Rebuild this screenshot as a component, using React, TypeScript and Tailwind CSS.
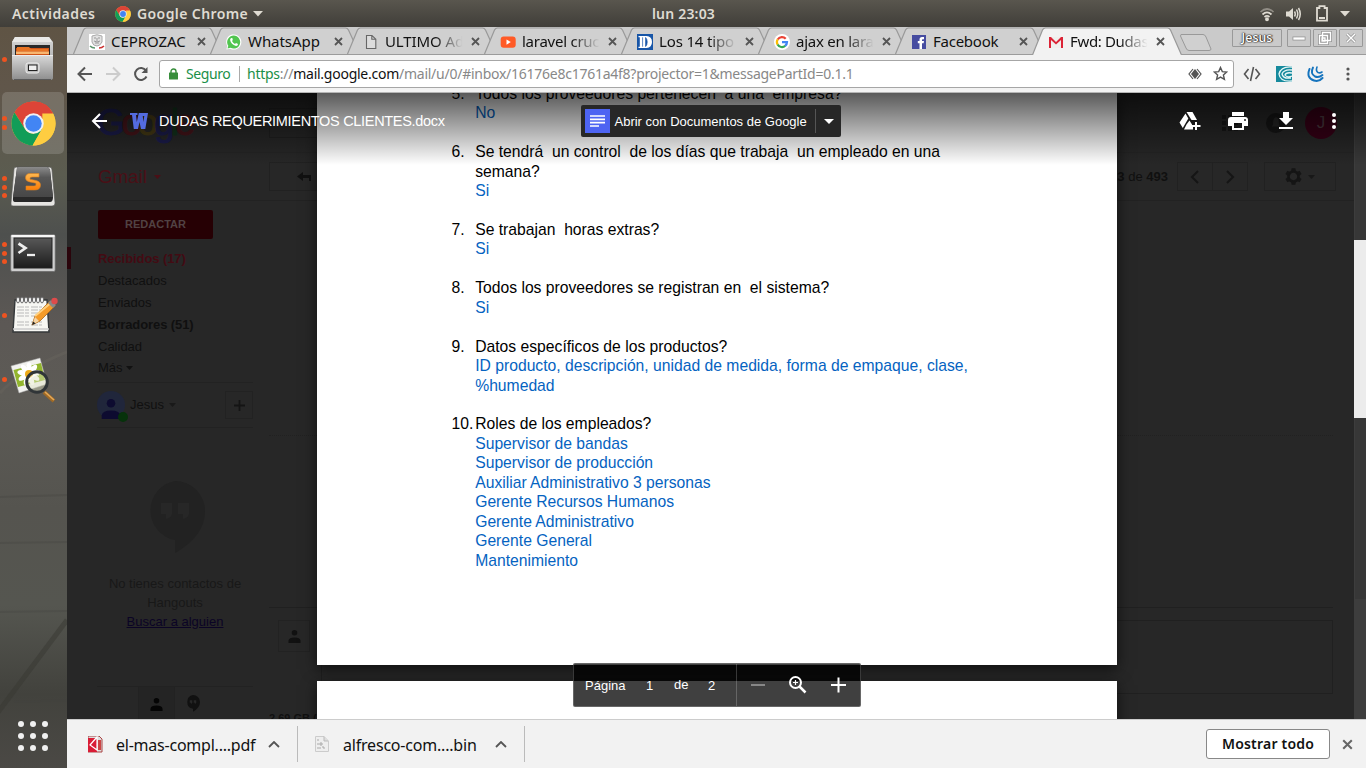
import React from "react";

const ui = "font-['Noto_Sans','Open_Sans',sans-serif]";
const arial = "font-['Liberation_Sans',Arial,sans-serif]";

function ChromeLogo({ size }: { size: number }) {
  return (
    <svg width={size} height={size} viewBox="0 0 48 48" className="block shrink-0">
      <circle cx="24" cy="24" r="23.5" fill="#fc3" />
      <path d="M24 24 L3.7 12.2 A23.5 23.5 0 0 1 44.9 13.2 Z" fill="#dd4437" />
      <path d="M24 13.2 H44.9 A23.5 23.5 0 0 0 3.7 12.2 L14.6 29.4 Z" fill="#dd4437" />
      <path d="M3.7 12.2 L14.6 29.4 A10.8 10.8 0 0 0 24 34.8 L33.4 29.4 L23 47.5 A23.5 23.5 0 0 1 3.7 12.2Z" fill="#119d58" />
      <path d="M33.4 13.2 H44.9 A23.5 23.5 0 0 1 23 47.5 L33.4 29.4Z" fill="#fecd41" />
      <circle cx="24" cy="24" r="10.9" fill="#f1f1f1" />
      <circle cx="24" cy="24" r="8.8" fill="#4285f4" />
    </svg>
  );
}

function TopBar() {
  return (
    <header className={`${ui} flex h-[27px] w-full shrink-0 items-center bg-gradient-to-b from-[#59564e] to-[#403e39] text-[#dfdbd2]`}>
      <div className="w-[104px] pl-[12px] text-[14px] font-semibold tracking-[0.45px] whitespace-nowrap">Actividades</div>
      <div className="flex w-[500px] items-center pl-[11px]">
        <ChromeLogo size={16} />
        <span className="ml-[6px] w-[110px] text-[14px] font-semibold tracking-[0.4px] whitespace-nowrap">Google Chrome</span>
        <svg width="10" height="6" viewBox="0 0 10 6" className="ml-[6px]"><path d="M0 0H10L5 5.5Z" fill="currentColor" /></svg>
      </div>
      <div className="w-[160px] pr-[1px] text-center text-[14px] font-semibold tracking-[0.2px] whitespace-nowrap">lun 23:03</div>
      <div className="ml-auto flex items-center pr-[16px]">
        <svg width="16" height="16" viewBox="0 0 16 16" fill="none" stroke="currentColor" strokeWidth="1.7">
          <path d="M1.5 6 Q8 0 14.5 6" opacity=".45" /><path d="M3.5 8.5 Q8 4.4 12.5 8.5" /><path d="M5.5 11 Q8 8.8 10.5 11" /><circle cx="8" cy="13.2" r="1.1" fill="currentColor" />
        </svg>
        <svg width="17" height="16" viewBox="0 0 17 16" fill="none" stroke="currentColor" strokeWidth="1.5" className="ml-[10px]">
          <path d="M1 5.5H4L8 2V14L4 10.5H1Z" fill="currentColor" stroke="none" /><path d="M9.5 5.5Q11 8 9.5 10.5M11.5 3.5Q14 8 11.5 12.5M13.5 2Q17 8 13.5 14" />
        </svg>
        <svg width="14" height="17" viewBox="0 0 14 17" fill="none" stroke="currentColor" strokeWidth="1.8" className="ml-[13px]">
          <path d="M2 3H4.4V1.2H9.6V3H12V15.6H2Z" /><path d="M4 13H10" strokeWidth="2" />
        </svg>
        <svg width="10" height="6" viewBox="0 0 10 6" className="ml-[11px]"><path d="M0 0H10L5 5.5Z" fill="currentColor" /></svg>
      </div>
    </header>
  );
}

function FilesIcon() {
  return (
    <svg width="46" height="48" viewBox="0 0 46 48">
      <defs>
        <linearGradient id="fcab" x1="0" y1="0" x2="0" y2="1"><stop offset="0" stopColor="#d9d9d9" /><stop offset="1" stopColor="#8d8d8d" /></linearGradient>
      </defs>
      <path d="M5 2H39L43 7V42Q43 45 40 45H4Q2 45 2 42V7Z" fill="url(#fcab)" />
      <path d="M5 2H39L42 7H2Z" fill="#e9e9e7" />
      <rect x="5" y="10" width="35" height="10" fill="#292929" />
      <path d="M6 13H39V20H6Z" fill="#cf5417" /><path d="M7 12H19L21 14H38V16H7Z" fill="#e87424" /><path d="M6 16.5H39V19H6Z" fill="#f8b670" />
      <path d="M2 20H43V42Q43 45 40 45H5Q2 45 2 42Z" fill="url(#fcab)" /><path d="M2 20.5H43" stroke="#ececec" />
      <rect x="16" y="28" width="13" height="10" rx="2" fill="#bdbdbd" stroke="#eee" /><rect x="18.5" y="30" width="8.5" height="5.5" fill="#efefef" stroke="#222" />
      <path d="M4 44.5H41" stroke="#5b5b5b" />
    </svg>
  );
}

function SublimeIcon() {
  return (
    <svg width="46" height="44" viewBox="0 0 46 44">
      <defs>
        <linearGradient id="key" x1="0" y1="0" x2="0" y2="1"><stop offset="0" stopColor="#8b8b8b" /><stop offset=".35" stopColor="#575757" /><stop offset="1" stopColor="#474747" /></linearGradient>
        <linearGradient id="sg" x1="0" y1="0" x2="0" y2="1"><stop offset="0" stopColor="#ffb84f" /><stop offset="1" stopColor="#fa7d08" /></linearGradient>
      </defs>
      <path d="M4 4Q4 2 7 2H39Q42 2 42 5L45 38Q45 41 42 41H3Q.5 41 1 38Z" fill="#e6e5e2" stroke="#555" strokeWidth=".6" />
      <path d="M7 3Q7 2 9 2H37Q39 2 40 5L43 32Q43 37 40 37H5Q2.5 37 3 33Z" fill="#282828" />
      <path d="M7 3Q7 2 9 2H37Q39 2 40 5L43 32H3Z" fill="url(#key)" />
      <path d="M29 12V8.5H20Q15.5 8.5 15.5 13Q15.5 16 20 17L26 18.2Q26.5 21 24 21H16V25H24.5Q30.5 25 30.5 20Q30.5 16.5 26 15.5L20 14.2Q19.5 12 22 12Z" fill="url(#sg)" stroke="#d98124" strokeWidth=".6" />
    </svg>
  );
}

function TerminalIcon() {
  return (
    <svg width="46" height="40" viewBox="0 0 46 40">
      <defs><linearGradient id="tm" x1="0" y1="0" x2="0" y2="1"><stop offset="0" stopColor="#585858" /><stop offset="1" stopColor="#1c1c1c" /></linearGradient></defs>
      <rect x=".7" y="1.5" width="44.5" height="37" rx="1.5" fill="#cecece" stroke="#666" strokeWidth=".7" />
      <rect x="1.5" y="2" width="43" height="2" fill="#f7f7f7" />
      <rect x="4" y="5" width="38" height="30" fill="url(#tm)" stroke="#222" />
      <path d="M8.5 10.5L15.5 15L8.5 20" fill="none" stroke="#eee" strokeWidth="2.7" /><path d="M17 22H25" stroke="#eee" strokeWidth="2.3" />
    </svg>
  );
}

function NotepadIcon() {
  const lines = [12, 15, 18, 21, 27, 30];
  return (
    <svg width="48" height="40" viewBox="0 0 48 40">
      <path d="M5 5H37L39 37H3Z" fill="#f7f7f3" stroke="#343739" strokeWidth="1.4" /><path d="M3 34H39" stroke="#ccc" strokeWidth="1.5" />
      {[8, 12, 16, 20, 24, 28, 32].map((x) => <ellipse key={x} cx={x} cy="5" rx="1.5" ry="3" fill="#fff" stroke="#666" />)}
      {lines.map((y) => <path key={y} d={`M7 ${y}H32`} stroke="#aaa" strokeDasharray="7 1 4 2" strokeWidth=".8" />)}
      <path d="M22 30L25 21L40 6L45 11L30 26Z" fill="#f49b29" stroke="#a96517" strokeWidth=".8" /><path d="M25 21L42 7" stroke="#ffd180" strokeWidth="2" />
      <path d="M22 30L25 22L29 26Z" fill="#f4d4a5" /><path d="M22 30L23.2 26.5L25.5 28.5Z" fill="#222" />
      <path d="M38 8L41 5L46 10L43 13Z" fill="#888" /><circle cx="44.500" cy="6" r="3.2" fill="#de4b4b" />
    </svg>
  );
}

function ViewerIcon() {
  return (
    <svg width="48" height="48" viewBox="0 0 48 48">
      <path d="M1 10L30 2L37 28L9 37Z" fill="#f1f1ee" stroke="#aaa" strokeWidth=".5" /><path d="M3.500 14L31 7L35 24L8 31Z" fill="#92b52e" />
      {[0, 40, 80, 120, 160, 200, 240, 280, 320].map((a) => <ellipse key={a} cx="19" cy="11.5" rx="2.7" ry="5.3" fill="white" transform={`rotate(${a} 19 18)`} />)}
      <circle cx="19" cy="18" r="4" fill="#edaa19" />
      <path d="M34 36L44 45" stroke="#a06a25" strokeWidth="4" /><path d="M35 36L44 44" stroke="#e3a859" strokeWidth="1.6" />
      <circle cx="27" cy="26" r="10.3" fill="#dfe3c4" fillOpacity=".45" stroke="#303538" strokeWidth="3" /><path d="M19 24Q23 18 29 19" fill="none" stroke="#fff" strokeWidth="1.4" opacity=".7" />
    </svg>
  );
}

function DockItem({ dots, children, box, h }: { dots: number; children: React.ReactNode; box?: string; h: string }) {
  return (
    <div className={`flex ${h} w-full items-center`}>
      <div className="flex w-[10px] shrink-0 flex-col items-end gap-[3.4px] pr-[3px]">
        {Array.from({ length: dots }).map((_, i) => <span key={i} className="h-[5px] w-[5px] rounded-full bg-[#ee5320]" />)}
      </div>
      <div className={`flex shrink-0 ${box ?? ""}`}>{children}</div>
    </div>
  );
}

function Dock() {
  return (
    <aside className="relative flex w-[67px] shrink-0 flex-col overflow-hidden bg-[linear-gradient(180deg,#5f5444_0%,#60564a_8%,#5b5c50_20%,#4e504e_28%,#5c5855_40%,#5d5b56_50%,#55544f_65%,#555650_78%,#42423d_90%,#4b4945_100%)]">
      <svg className="absolute inset-0" width="67" height="741" fill="none">
        <path d="M-4 688L67 593" stroke="#373831" strokeWidth="5" opacity=".5" />
        <path d="M0 516L67 515M0 585L67 584M14 675L67 673M0 470L67 468" stroke="#41433f" strokeWidth="2" opacity=".3" />
        <path d="M0 366Q20 344 67 325" stroke="#777269" strokeWidth="3" opacity=".2" />
      </svg>
      <div className="relative flex flex-1 flex-col">
        <DockItem dots={1} h="h-[64px]" box="pb-[1px]"><FilesIcon /></DockItem>
        <div className="relative h-[64px]"><div className="absolute top-[1px] left-[2px] h-[62px] w-[62px] rounded-[5px] bg-white/15" /><DockItem dots={2} h="relative h-[64px]" box="pl-[1px]"><ChromeLogo size={45} /></DockItem></div>
        <DockItem dots={3} h="h-[64px]"><SublimeIcon /></DockItem>
        <DockItem dots={3} h="h-[68px]"><TerminalIcon /></DockItem>
        <DockItem dots={1} h="h-[57px]" box="pb-[2px]"><NotepadIcon /></DockItem>
        <DockItem dots={1} h="h-[71px]"><ViewerIcon /></DockItem>
        <div className="mt-auto mb-[17px] ml-[18px] grid w-[30px] grid-cols-3 gap-[6px]">
          {Array.from({ length: 9 }).map((_, i) => <span key={i} className="h-[6px] w-[6px] rounded-full bg-[#f0f0f0]" />)}
        </div>
      </div>
    </aside>
  );
}

const favicons: Record<string, React.ReactNode> = {
  ceprozac: <svg width="16" height="16" viewBox="0 0 16 16"><path fill="#fff" d="M0 0h16v16H0z" /><path d="M3 2Q8-.5 13 2V8Q11 12 8 12Q4 12 3 8Z" fill="#e2e2e2" stroke="#aaa" /><path d="M5 4H7M9 4H11M5 7Q8 9 11 7M6 9H10M8 4V7" stroke="#999" fill="none" /><path d="M1 12Q3 14 6 14" stroke="#5b966e" strokeWidth="1.5" fill="none" /><path d="M10 14Q13 14 15 12" stroke="#c33" strokeWidth="1.5" fill="none" /></svg>,
  whatsapp: <svg width="16" height="16" viewBox="0 0 16 16"><path d="M.4 15.6L1.3 12A7.6 7.6 0 1 1 4.2 14.7Z" fill="#fff" /><path d="M1.5 14.5L2.3 11.8A6.5 6.5 0 1 1 4.5 13.8Z" fill="#52c550" /><path d="M5.4 4Q4 4.4 4.1 6Q5 10.5 10 12Q12 11.8 12 10L10 9L9 10Q7 9 6 7L6.8 6L6.3 4Z" fill="#fff" /></svg>,
  page: <svg width="16" height="16" viewBox="0 0 16 16"><path d="M3.5 1.5H9L12.8 5.2V14.5H3.5ZM8.8 1.5V5.3H12.8" fill="#dcdcdc" stroke="#666" strokeWidth="1.1" /></svg>,
  youtube: <svg width="16" height="16" viewBox="0 0 16 16"><rect x=".7" y="2.5" width="15" height="11.3" rx="3" fill="#ff5a26" /><path d="M6.5 5.5L10.8 8.1L6.5 10.7Z" fill="#fff" /></svg>,
  dd: <svg width="16" height="16" viewBox="0 0 16 16"><path fill="#1755a7" d="M0 0h16v16H0z" /><path d="M1.500 2H9.500Q15 2.500 15 8Q15 13.500 9.500 14H1.500V12.700H2.800V3.300H1.500Z" fill="#fff" /><path d="M5.600 3.300V12.700M8.600 3.500Q10.200 5 10.200 8Q10.200 11 8.600 12.500Z" fill="#1755a7" stroke="#1755a7" strokeWidth=".7" /></svg>,
  google: <svg width="16" height="16" viewBox="0 0 16 16"><circle cx="8" cy="8" r="8" fill="#fff" /><g fill="none" strokeWidth="2.2"><path d="M11.7 4.7A5 5 0 0 0 3.7 5.5" stroke="#ea4335" /><path d="M3.7 5.3A5 5 0 0 0 3.7 10.7" stroke="#fbbc05" /><path d="M3.6 10.5A5 5 0 0 0 11.3 11.8" stroke="#34a853" /><path d="M8 8.1H13A5 5 0 0 1 11.2 11.8" stroke="#4285f4" /></g></svg>,
  facebook: <svg width="16" height="16" viewBox="0 0 16 16"><rect x="1" y="1" width="14" height="14" fill="#464ca0" /><path d="M8.5 15V9.3H6.8V7H8.5V5.5Q8.5 3 11 3H13V5.2H11.7Q11 5.2 11 6V7H13L12.6 9.3H11V15Z" fill="#fff" /></svg>,
  gmail: <svg width="16" height="16" viewBox="0 0 16 16"><path d="M1 3H15V14H1Z" fill="#efefed" /><path d="M1 14V3H3L8 8L13 3H15V14H13V6L8 10.5L3 6V14Z" fill="#dc2437" /></svg>,
};

const tabs: [string, string, string][] = [
  ["ceprozac", "CEPROZAC", "text-[15px] tracking-[-0.050px]"],
  ["whatsapp", "WhatsApp", "text-[15px] tracking-[-0.050px]"],
  ["page", "ULTIMO Ad", "text-[15px] tracking-[-0.100px]"],
  ["youtube", "laravel cruc", "text-[15px] tracking-[-0.250px]"],
  ["dd", "Los 14 tipo", "text-[15px] tracking-[-0.150px]"],
  ["google", "ajax en lara", "text-[15px] tracking-[-0.250px]"],
  ["facebook", "Facebook", "text-[15px] tracking-[-0.250px]"],
  ["gmail", "Fwd: Dudas", "text-[15px] tracking-[-0.350px]"],
];

function Cross({ s = 9, c = "#555", w = 1.8 }: { s?: number; c?: string; w?: number }) {
  return <svg width={s} height={s} viewBox="0 0 9 9"><path d="M1 1L8 8M8 1L1 8" stroke={c} strokeWidth={w} /></svg>;
}

function TabStrip() {
  return (
    <div className={`${ui} relative flex h-[28px] shrink-0 bg-[#cacaca]`}>
      <svg className="absolute inset-0" width="1299" height="28" fill="none">
        <path d="M0 27.5H1299" stroke="#9b9b9b" />
        {[0, 1, 2, 3, 4, 5, 6].map((n) => (
          <path key={n} transform={`translate(${6 + n * 137} 0)`} d="M.5 27L10.5 3Q11.5 1 13.5 1H135.5Q137.5 1 138.5 3L149.5 27" fill="#d0d0d0" stroke="#999" strokeWidth="1.2" />
        ))}
        <path transform="translate(965 0)" d="M.5 28L10.5 3Q11.5 1 13.5 1H135.5Q137.5 1 138.5 3L149.5 28" fill="#f2f2f2" stroke="#999" strokeWidth="1.2" />
        <path d="M1114 7.5H1136Q1138 7.5 1139 10L1144 22Q1144 23.500 1142 23.500H1122Q1120 23.500 1119 21L1113.500 9Z" fill="#d0d0d0" stroke="#999" />
      </svg>
      <div className="relative flex pl-[22px]">
        {tabs.map(([id, title, tr]) => (
          <div key={id} className="flex h-[29px] w-[137px] items-center">
            {favicons[id]}
            <span className={`-mt-[2px] ml-[6px] w-[80px] overflow-hidden leading-[20px] whitespace-nowrap text-[#111] ${tr} ${title.length > 8 ? "[mask-image:linear-gradient(90deg,#000_62%,transparent_97%)]" : ""}`}>{title}</span>
            <span className="ml-[5.500px]"><Cross /></span>
          </div>
        ))}
      </div>
      <div className="relative ml-auto flex gap-[5px] pt-[2px] pr-[3px]">
        <div className="flex h-[18px] w-[50px] items-center justify-center rounded-[1px] border border-[#999] text-[12.500px] font-medium text-white [text-shadow:0_0_1px_#222,0_0_2px_#222,1px_0_1px_#333]">Jesus</div>
        <div className="flex gap-[2px]">
          {["M5 8H15V9H5Z", "M7.500 2.500H15.500V10.500H7.500ZM4.500 5.500H12.500V13.500H4.500ZM7 8H10V11H7Z", "M6 4L14 12M14 4L6 12"].map((d) => (
            <div key={d} className="flex h-[18px] w-[24px] items-center justify-center rounded-[1px] border border-[#999]">
              <svg width="20" height="16" viewBox="0 0 20 16" fill="none"><path d={d} stroke="#999" strokeWidth="3" /><path d={d} stroke="#fff" strokeWidth="1.3" /></svg>
            </div>
          ))}
        </div>
      </div>
    </div>
  );
}

function Toolbar() {
  return (
    <div className={`${ui} flex h-[38px] shrink-0 items-center border-b border-[#b5b5b5] bg-[#f2f2f2]`}>
      <svg width="92" height="24" viewBox="0 0 92 24" fill="none" stroke="#555" strokeWidth="2">
        <path d="M25 12H12M18 5.500L11.500 12L18 18.500" />
        <path d="M39 12H52M46 5.500L52.500 12L46 18.500" stroke="#ccc" />
        <path d="M79 8.500A6 6 0 1 0 79.500 14.500" /><path d="M80.500 5V11H74.500Z" fill="#555" stroke="none" />
      </svg>
      <div className="flex h-[28px] w-[1075px] items-center rounded-[3px] border border-[#a6a6a6] bg-white pl-[9px] text-[14px] whitespace-nowrap">
        <svg width="9" height="12" viewBox="0 0 9 12"><path d="M2 5V3.500A2.500 2.500 0 0 1 7 3.500V5" fill="none" stroke="#388e3c" strokeWidth="1.4" /><rect y="4.500" width="9" height="7" rx=".5" fill="#388e3c" /></svg>
        <span className="ml-[8px] w-[45px] tracking-[-0.400px] text-[#1a8f48]">Seguro</span>
        <span className="ml-[8px] h-[16px] w-px bg-[#aaa]" />
        <span className="ml-[7px] tracking-[-0.255px] text-[#888]"><span className="text-[#1a8f48]">https</span>://<span className="text-[#111]">mail.google.com</span>/mail/u/0/#inbox/16176e8c1761a4f8?projector=1&amp;messagePartId=0.1.1</span>
        <svg width="14" height="12" viewBox="0 0 14 12" className="ml-auto"><path d="M5 1L1 6L5 11M9 1L13 6L9 11" fill="none" stroke="#555" strokeWidth="1.2" /><path d="M7 1L11 6L7 11L3 6Z" fill="#555" /></svg>
        <svg width="15" height="15" viewBox="0 0 15 15" className="mr-[5px] ml-[11px]"><path d="M7.500 1.500L9.300 5.600L13.700 6L10.400 9L11.400 13.400L7.500 11.100L3.600 13.400L4.600 9L1.300 6L5.700 5.600Z" fill="none" stroke="#555" strokeWidth="1.4" /></svg>
      </div>
      <svg width="18" height="16" viewBox="0 0 18 16" fill="none" stroke="#555" strokeWidth="1.6" className="ml-[9px]"><path d="M5.500 3L1.500 8L5.500 13M12.500 3L16.500 8L12.500 13M10.500 1L7.500 15" /></svg>
      <svg width="16" height="16" viewBox="0 0 16 16" className="ml-[15px]"><path d="M0 0H16V16H0Z" fill="#168a9d" /><path d="M16 1Q5 0 3 8Q4 16 16 15M16 4Q8 3 6 8Q7 13 15 12M16 7Q10 6 9 9Q11 12 16 10" fill="none" stroke="#e9f7f7" strokeWidth="1.3" /></svg>
      <svg width="17" height="17" viewBox="0 0 17 17" fill="none" stroke="#1674bd" strokeLinecap="round" className="ml-[15px]"><path d="M2.500 4Q-1 13 7 15.500Q12 17 15.500 13" strokeWidth="2" /><path d="M6 2.500Q3 8.500 8 11.500Q12 13 15.500 10" strokeWidth="1.900" /><path d="M10 2Q8.500 6 11 7.500Q13 8.500 15 7" strokeWidth="1.600" /></svg>
      <svg width="4" height="14" viewBox="0 0 4 14" fill="#555" className="ml-[22px]"><circle cx="2" cy="2" r="1.600" /><circle cx="2" cy="7" r="1.600" /><circle cx="2" cy="12" r="1.600" /></svg>
    </div>
  );
}

function Person({ s, c }: { s: number; c: string }) {
  return <svg width={s} height={s} viewBox="0 0 14 14" fill={c}><circle cx="7" cy="3" r="3" /><path d="M.5 14V11.500Q1 8 7 8Q13 8 13.500 11.500V14Z" /></svg>;
}

function Quote({ w, c, hole }: { w: number; c: string; hole: string }) {
  return <svg width={w} height={w * 1.2} viewBox="0 0 60 72"><path d="M30 0A30 30 0 0 1 60 30Q60 55 30 72V59A30 30 0 0 1 30 0Z" fill={c} /><path d="M16 22H27V33Q26 37 21 38V33H16ZM33 22H44V33Q43 37 38 38V33H33Z" fill={hole} /></svg>;
}

function GmailPage() {
  return (
    <div className={`${arial} flex h-full w-full bg-[#272727] text-[13px] text-[#101010]`}>
      <div className="flex min-w-0 flex-1 flex-col">
        <div className="flex h-[60px] shrink-0 items-center border-b border-[#242424] pl-[30px]">
          <div className="w-[172px] text-[36px] leading-none tracking-[-3.600px] [-webkit-text-stroke:1px]">
            <span className="text-[#1b1c4c]">G</span><span className="text-[#461419]">o</span><span className="text-[#463a14]">o</span><span className="text-[#1b1c4c]">g</span><span className="text-[#12331c]">l</span><span className="text-[#461419]">e</span>
          </div>
          <div className="h-[30px] w-[560px] border border-[#202020]" />
          <div className="ml-auto flex items-center pr-[17px]">
            <div className="mr-[28px] grid grid-cols-3 gap-[2px]">{Array.from({ length: 9 }).map((_, i) => <span key={i} className="h-[4px] w-[4px] bg-[#171717]" />)}</div>
            <div className="mr-[19px] flex h-[20px] w-[20px] items-center justify-center rounded-full bg-[#161616]"><svg width="10" height="12" viewBox="0 0 14 16" fill="#272727"><path d="M7 0Q11 1 11 7V10L13 13H1L3 10V7Q3 1 7 0Z" /></svg></div>
            <div className="flex h-[32px] w-[32px] items-center justify-center rounded-full bg-[#370016] text-[17px] text-[#4b3b40]">J</div>
          </div>
        </div>
        <div className="flex h-[48px] shrink-0 items-center border-b border-[#222]">
          <div className="flex w-[202px] items-center pt-[1px] pl-[31px] text-[18.700px] text-[#4a0f16]">Gmail<svg className="ml-[7px]" width="7" height="4"><path d="M0 0H7L3.500 4Z" fill="currentColor" /></svg></div>
          <div className="flex h-[29px] w-[74px] items-center justify-center border border-[#212121] pr-[4px]"><svg width="15" height="10" viewBox="0 0 15 10"><path d="M0 4.500L6 0V3H14V9H12V6H6V9Z" fill="#111" /></svg></div>
          <div className="ml-auto flex items-center pr-[18px]">
            <span className="mr-[9px]"><b>23</b> de <b>493</b></span>
            <div className="flex h-[29px] w-[71px] border border-[#212121]">
              {["M8 1L2 7L8 13", "M2 1L8 7L2 13"].map((d, i) => <div key={d} className={`flex flex-1 items-center justify-center ${i ? "border-l border-[#212121]" : ""}`}><svg width="10" height="14"><path d={d} fill="none" stroke="#151515" strokeWidth="2" /></svg></div>)}
            </div>
            <div className="ml-[16px] flex h-[29px] w-[72px] items-center justify-center border border-[#212121]">
              <svg width="17" height="17" viewBox="-8.500 -8.500 17 17"><circle r="5" fill="none" stroke="#151515" strokeWidth="2.600" />{[0, 60, 120, 180, 240, 300].map((a) => <path key={a} d="M-1.900 -8.200H1.900L2.400 -5H-2.400Z" fill="#151515" transform={`rotate(${a})`} />)}</svg>
              <svg className="ml-[6px]" width="7" height="4"><path d="M0 0H7L3.500 4Z" fill="#181818" /></svg>
            </div>
          </div>
        </div>
        <div className="flex min-h-0 flex-1">
          <nav className="flex w-[202px] shrink-0 flex-col">
            <div className="mt-[9px] ml-[31px] flex h-[29px] w-[115px] items-center justify-center rounded-[2px] bg-[#260004] text-[11px] font-bold text-[#514243]">REDACTAR</div>
            <div className="mt-[8px] flex h-[22px] items-center border-l-4 border-[#2a040b] pt-[2px] pl-[27px] font-bold tracking-[-0.080px] text-[#430b13]">Recibidos (17)</div>
            <div className="flex h-[22px] items-center pt-[2px] pl-[31px]">Destacados</div>
            <div className="flex h-[22px] items-center pt-[2px] pl-[31px]">Enviados</div>
            <div className="flex h-[22px] items-center pt-[2px] pl-[31px] font-bold tracking-[-0.080px]">Borradores (51)</div>
            <div className="flex h-[22px] items-center pt-[2px] pl-[31px]">Calidad</div>
            <div className="flex h-[21px] items-center pl-[31px]">Más<svg className="ml-[3px]" width="7" height="4"><path d="M0 0H7L3.500 4Z" fill="#111" /></svg></div>
            <div className="mt-[4px] ml-[30px] flex h-[46px] w-[156px] items-center border-y border-[#222]">
              <div className="relative flex h-[28px] w-[28px] items-end justify-center overflow-visible rounded-full bg-[#20263b]"><Person s={20} c="#0d0b30" /><span className="absolute right-[-3px] bottom-[-3px] h-[10px] w-[10px] rounded-full bg-[#06320b]" /></div>
              <span className="ml-[5px]">Jesus</span><svg className="ml-[5px]" width="7" height="4"><path d="M0 0H7L3.500 4Z" fill="#191919" /></svg>
              <span className="ml-auto flex h-[28px] w-[28px] items-center justify-center border border-[#222]"><svg width="11" height="11"><path d="M5.500 0V11M0 5.500H11" stroke="#141414" strokeWidth="1.800" /></svg></span>
            </div>
            <div className="mt-[53px] ml-[78px]"><Quote w={60} c="#222222" hole="#272727" /></div>
            <div className="mt-[21px] w-[186px] pl-[30px] text-center leading-[19px] text-[#181818]"><p>No tienes contactos de</p><p>Hangouts</p><p className="text-[#0b0425] underline">Buscar a alguien</p></div>
            <div className="mt-auto ml-[30px] flex h-[33px] w-[156px] border-t border-[#222]">
              <div className="ml-[41px] flex w-[37px] items-center justify-center border-x border-[#222] bg-[#242424] pt-[2px]"><Person s={13} c="#050505" /></div>
              <div className="ml-[11px] flex items-center pt-[1px]"><Quote w={14} c="#111" hole="#272727" /></div>
            </div>
          </nav>
          <main className="flex min-w-0 flex-1 flex-col pr-[21px]">
            <div className="mt-[234px] border-t border-dotted border-[#212121]" />
            <div className="mt-[171px] flex border-t border-[#202020] pt-[12px] pl-[9px]">
              <div className="flex h-[32px] w-[32px] items-center justify-center border border-[#222]"><Person s={13} c="#111" /></div>
              <div className="ml-[11px] h-[74px] flex-1 border border-[#202020]" />
            </div>
            <div className="mt-auto h-[7px] overflow-hidden text-[11px] leading-[12px] font-bold">2.69 GB (</div>
          </main>
        </div>
      </div>
      <div className="w-[12px] shrink-0 bg-[#3d3d3d]"><div className="ml-px h-[506px] bg-[#373737]" /></div>
    </div>
  );
}

const questions: { n: string; q: string[]; a: string[] }[] = [
  { n: "5.", q: ["Todos los proveedores pertenecen  a una  empresa?"], a: ["No"] },
  { n: "6.", q: ["Se tendrá  un control  de los días que trabaja  un empleado en una", "semana?"], a: ["Si"] },
  { n: "7.", q: ["Se trabajan  horas extras?"], a: ["Si"] },
  { n: "8.", q: ["Todos los proveedores se registran en  el sistema?"], a: ["Si"] },
  { n: "9.", q: ["Datos específicos de los productos?"], a: ["ID producto, descripción, unidad de medida, forma de empaque, clase,", "%humedad"] },
  { n: "10.", q: ["Roles de los empleados?"], a: ["Supervisor de bandas", "Supervisor de producción", "Auxiliar Administrativo 3 personas", "Gerente Recursos Humanos", "Gerente Administrativo", "Gerente General", "Mantenimiento"] },
];

function DocumentPages() {
  return (
    <div className={`${arial} absolute inset-0 flex justify-center overflow-hidden`}>
      <div className="flex w-[800px] flex-col gap-[16px]">
        <section className="h-[572px] shrink-0 bg-white pl-[135px] shadow-[0_4px_14px_rgba(0,0,0,0.6)]">
          <div className="-mt-[9.300px] flex flex-col gap-[19.460px] text-[15.700px] leading-[19.460px] text-black">
            {questions.map((item) => (
              <div key={item.n} className="flex whitespace-pre">
                <div className="w-[23.700px] shrink-0">{item.n}</div>
                <div>
                  {item.q.map((t) => <p key={t}>{t}</p>)}
                  {item.a.map((t) => <p key={t} className="text-[#0563c1]">{t}</p>)}
                </div>
              </div>
            ))}
          </div>
        </section>
        <section className="h-[100px] shrink-0 bg-white shadow-[0_4px_14px_rgba(0,0,0,0.6)]" />
      </div>
    </div>
  );
}

function ViewerBar() {
  return (
    <div className={`${arial} absolute inset-x-0 top-0 flex h-[72px] items-start bg-gradient-to-b from-black/65 to-transparent pt-[12px] text-white`}>
      <div className="flex h-[32px] w-[513.500px] items-center pl-[24px]">
        <svg width="17" height="16" viewBox="0 0 17 16" fill="none" stroke="#fff" strokeWidth="2"><path d="M16 8H2M9 1L2 8L9 15" /></svg>
        <svg width="18" height="18" viewBox="0 0 18 18" className="ml-[22px]"><path d="M0 1H7.500V3H6L6.800 10L8.800 1H12.500L13.300 10L14.300 4H11.500V1H18L15.300 17H11L9.500 10L8 17H3.800L2 3H0Z" fill="#536bdf" /></svg>
        <span className="ml-[11px] pt-[1px] text-[14.500px] tracking-[-0.310px] whitespace-nowrap">DUDAS REQUERIMIENTOS CLIENTES.docx</span>
      </div>
      <div className="flex h-[32px] w-[260px] items-center rounded-[2px] bg-[#272727] pl-[4px] text-[13px]">
        <span className="flex h-[24px] w-[25px] items-center justify-center bg-[#4d64f2]"><svg width="15" height="12" stroke="#fff" strokeWidth="1.700"><path d="M0 1H15M0 4.300H15M0 7.600H15M0 11H9" /></svg></span>
        <span className="ml-[5px] w-[192px] pt-[1px] whitespace-nowrap">Abrir con Documentos de Google</span>
        <span className="ml-[8px] h-[24px] w-px bg-[#555]" />
        <svg width="10" height="5" className="ml-[8px]"><path d="M0 0H10L5 5Z" fill="#fff" /></svg>
      </div>
      <div className="ml-auto flex h-[32px] items-center pr-[30px]">
        <svg width="22" height="20" viewBox="0 0 22 20" fill="#fff"><path d="M7.500 1H13.500L18 9H12.500ZM6.500 2.500L9.300 7.500L3.800 17L.5 11.500ZM7.500 13.500L10.500 9.500L13 13.500V15.500H14V18.500H5Z" /><path d="M17 11V19M13 15H21.500" stroke="#fff" strokeWidth="2" /></svg>
        <svg width="20" height="19" viewBox="0 0 20 19" className="ml-[27px]"><path d="M4 0H16V4H4ZM3 5H17Q20 5 20 8V14H16V18H4V14H0V8Q0 5 3 5ZM6 11V16H14V11Z" fill="#fff" fillRule="evenodd" /><circle cx="17" cy="8" r="1" fill="#222" /></svg>
        <svg width="14" height="18" viewBox="0 0 14 18" className="ml-[31px]" fill="#fff"><path d="M4 0H10V6H14L7 13L0 6H4ZM0 15H14V17H0Z" /></svg>
        <svg width="4" height="18" viewBox="0 0 4 18" className="ml-[39px]" fill="#fff"><circle cx="2" cy="3" r="2" /><circle cx="2" cy="9" r="2" /><circle cx="2" cy="15" r="2" /></svg>
      </div>
    </div>
  );
}

function PageControls() {
  return (
    <div className={`${arial} absolute top-[570px] left-[506px] flex h-[44px] w-[288px] items-center rounded-[2px] border border-white/20 bg-black/75 text-[13px] text-white`}>
      <span className="ml-[11px] w-[61px] pt-[2px]">Página</span><span className="w-[28px] pt-[2px]">1</span><span className="w-[34px]">de</span><span className="w-[28px] pt-[2px]">2</span>
      <span className="h-full w-px bg-white/20" />
      <svg width="118" height="24" viewBox="0 0 118 24" fill="none" stroke="#fff" strokeWidth="2">
        <path d="M14 12H28" stroke="#999" strokeWidth="1.600" /><circle cx="58.500" cy="9.500" r="5.500" /><path d="M62.500 13.500L68.500 19.500" strokeWidth="2.500" /><path d="M58.500 7V12M56 9.500H61" strokeWidth="1.200" /><path d="M94 12H109M101.500 4.500V19.500" />
      </svg>
    </div>
  );
}

function DownloadShelf() {
  const up = <svg width="12" height="7" viewBox="0 0 12 7"><path d="M1 6L6 1L11 6" fill="none" stroke="#555" strokeWidth="1.800" /></svg>;
  return (
    <footer className={`${ui} flex h-[49px] shrink-0 items-center border-t border-[#ccc] bg-[#f2f2f2] text-[16px] whitespace-nowrap text-[#111]`}>
      <div className="flex h-[36px] w-[231px] items-center border-r border-[#bbb] pl-[21px]">
        <svg width="15" height="17" viewBox="0 0 15 17"><path d="M0 0H11L14 3V16H0Z" fill="#ddd" stroke="#a44" /><path d="M0 2H9V16H0Z" fill="#d91d36" /><path d="M9 1L2 9L9 14ZM9 2V14" fill="none" stroke="#fff" strokeWidth="1.200" /><path d="M10 4H13V14H10Z" fill="#c44" /></svg>
        <span className="ml-[13px] w-[140px] pt-[2px] tracking-[-0.230px]">el-mas-compl....pdf</span><span className="ml-[12px]">{up}</span>
      </div>
      <div className="flex h-[36px] w-[227px] items-center border-r border-[#bbb] pl-[17px]">
        <svg width="14" height="16" viewBox="0 0 14 16"><path d="M.5.5H9L13.500 5V15.500H.5Z" fill="#eee" stroke="#ccc" /><path d="M9 .5V5H13" fill="#ddd" stroke="#bbb" /><path d="M3 3V5M3 7V9M5 7H7V9H5ZM3 11V13M5 11V13M7 11H9V13" stroke="#aaa" fill="none" /></svg>
        <span className="ml-[14px] w-[134px] pt-[2px] tracking-[-0.200px]">alfresco-com....bin</span><span className="ml-[18px]">{up}</span>
      </div>
      <div className="ml-auto flex items-center pr-[13px]">
        <button className="h-[30px] w-[124px] rounded-[3px] border border-[#888] bg-white pb-[2px] text-[14px] font-semibold tracking-[0.200px]">Mostrar todo</button>
        <span className="ml-[12px]"><Cross s={11} c="#666" w={1.7} /></span>
      </div>
    </footer>
  );
}

export default function App() {
  return (
    <div className="flex h-[768px] w-[1366px] flex-col overflow-hidden">
      <TopBar />
      <div className="flex min-h-0 flex-1">
        <Dock />
        <div className="flex min-w-0 flex-1 flex-col">
          <TabStrip />
          <Toolbar />
          <div className="relative min-h-0 flex-1 overflow-hidden">
            <GmailPage />
            <DocumentPages />
            <ViewerBar />
            <div className="absolute top-[147px] right-0 h-[178px] w-[12px] bg-[#ececec]" />
            <PageControls />
          </div>
          <DownloadShelf />
        </div>
      </div>
    </div>
  );
}
